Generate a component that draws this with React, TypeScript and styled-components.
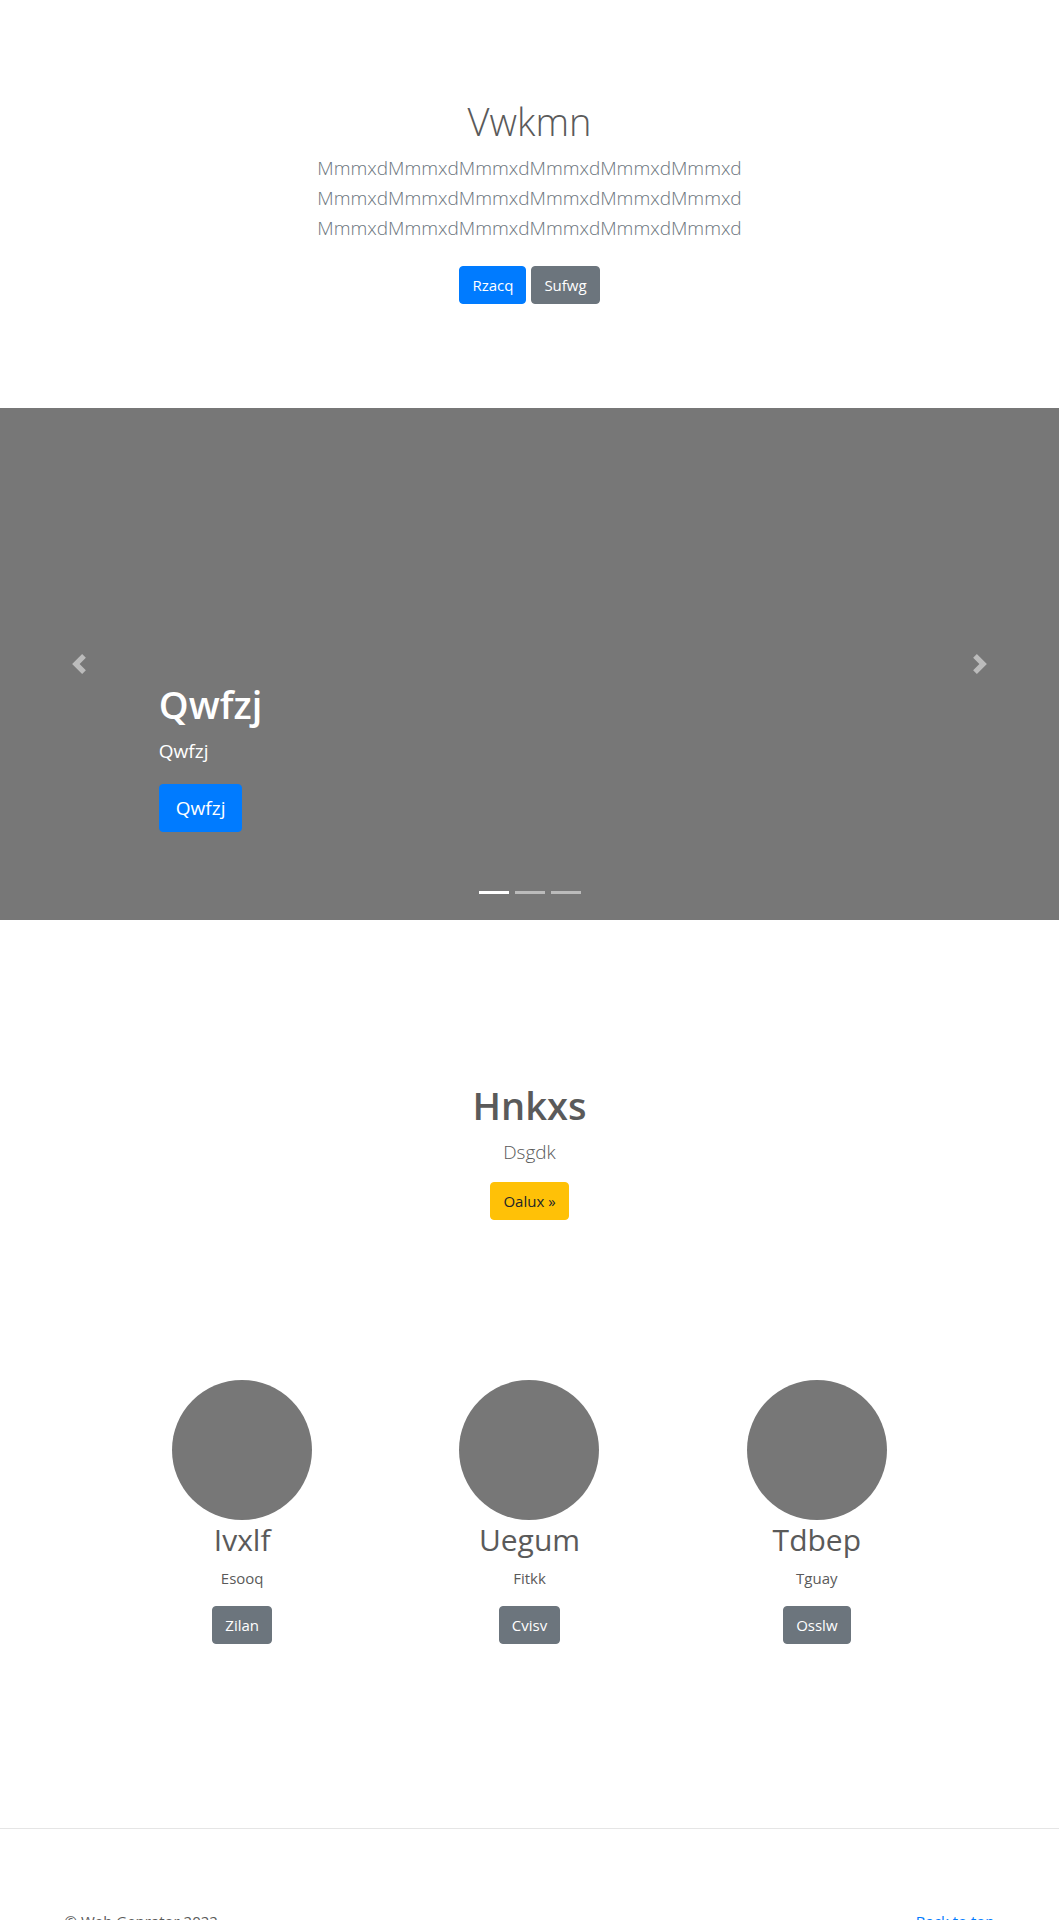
import React from "react";
import styled, { createGlobalStyle, css } from "styled-components";

const GlobalStyle = createGlobalStyle`
  *, *::before, *::after { box-sizing: border-box; }
  body {
    margin: 0;
    background: #fff;
    color: #5a5a5a;
    font-family: "Segoe UI", "Open Sans", "Noto Sans", sans-serif;
    font-size: 15px;
    line-height: 24px;
  }
  h1, h2, p { margin: 0; }
`;

type Tone = "primary" | "secondary" | "warning";
const tones: Record<Tone, { bg: string; fg: string }> = {
  primary: { bg: "#007bff", fg: "#fff" },
  secondary: { bg: "#6c757d", fg: "#fff" },
  warning: { bg: "#ffc107", fg: "#212529" },
};

const Button = styled.button<{ $tone: Tone; $large?: boolean }>`
  display: inline-block;
  border: 1px solid ${(p) => tones[p.$tone].bg};
  border-radius: 4px;
  padding: 6px 12px;
  background: ${(p) => tones[p.$tone].bg};
  color: ${(p) => tones[p.$tone].fg};
  font-family: inherit;
  font-size: 15px;
  line-height: 24px;
  cursor: pointer;
  ${(p) =>
    p.$large &&
    css`
      padding: 8px 16px;
      font-size: 19px;
      line-height: 30px;
    `}
`;

const Hero = styled.section`
  display: flex;
  flex-direction: column;
  align-items: center;
  padding: 97px 16px 104px;
  text-align: center;
`;

const Title = styled.h1<{ $weight: number }>`
  margin-bottom: 8px;
  font-size: 38px;
  line-height: 48px;
  font-weight: ${(p) => p.$weight};
`;

const Lead = styled.p<{ $muted?: boolean }>`
  margin-bottom: 15px;
  font-size: 19px;
  line-height: 30px;
  font-weight: 300;
  color: ${(p) => (p.$muted ? "#6c757d" : "inherit")};
`;

const Actions = styled.div`
  display: flex;
  gap: 5px;
  padding-top: 8px;
`;

const Carousel = styled.section`
  position: relative;
  display: flex;
  align-items: flex-end;
  height: 512px;
  padding: 0 15% 88px;
  background: #777;
  color: #fff;
`;

const CaptionText = styled.p`
  margin-bottom: 18px;
  font-size: 19px;
  line-height: 30px;
`;

const Control = styled.button<{ $side: "left" | "right" }>`
  position: absolute;
  top: 0;
  bottom: 0;
  ${(p) => p.$side}: 0;
  display: flex;
  align-items: center;
  justify-content: center;
  width: 15%;
  border: 0;
  padding: 0;
  background: none;
  opacity: 0.5;
  cursor: pointer;
`;

const Indicators = styled.div`
  position: absolute;
  left: 15%;
  right: 15%;
  bottom: 16px;
  display: flex;
  justify-content: center;
  gap: 6px;
`;

const Indicator = styled.button<{ $active?: boolean }>`
  width: 30px;
  height: 23px;
  border: 0 solid transparent;
  border-width: 10px 0;
  padding: 0;
  background: #fff;
  background-clip: padding-box;
  opacity: ${(p) => (p.$active ? 1 : 0.5)};
  cursor: pointer;
`;

const Callout = styled.section`
  display: flex;
  flex-direction: column;
  align-items: center;
  padding: 161px 16px 160px;
  text-align: center;
`;

const Features = styled.section`
  display: grid;
  grid-template-columns: repeat(3, 1fr);
  max-width: 862px;
  margin: 0 auto;
  padding-bottom: 184px;
`;

const Feature = styled.article`
  display: flex;
  flex-direction: column;
  align-items: center;
  text-align: center;
`;

const Circle = styled.div`
  width: 140px;
  height: 140px;
  border-radius: 50%;
  background: #777;
`;

const FeatureTitle = styled.h2`
  margin-bottom: 6px;
  font-size: 30px;
  line-height: 40px;
  font-weight: 400;
`;

const FeatureText = styled.p`
  margin-bottom: 16px;
`;

const Footer = styled.footer`
  border-top: 1px solid #e5e5e5;
  padding-top: 80px;
`;

const FooterRow = styled.div`
  display: flex;
  justify-content: space-between;
  max-width: 960px;
  margin: 0 auto;
  padding: 0 15px 16px;
`;

const Link = styled.a`
  color: #007bff;
  text-decoration: none;
`;

const features = [
  { title: "Ivxlf", text: "Esooq", action: "Zilan" },
  { title: "Uegum", text: "Fitkk", action: "Cvisv" },
  { title: "Tdbep", text: "Tguay", action: "Osslw" },
];

const Chevron = ({ d }: { d: string }) => (
  <svg width="20" height="20" viewBox="0 0 8 8" fill="#fff" aria-hidden="true">
    <path d={d} />
  </svg>
);

export default function App() {
  return (
    <>
      <GlobalStyle />
      <main id="top">
        <Hero>
          <Title $weight={300}>Vwkmn</Title>
          <Lead $muted>
            MmmxdMmmxdMmmxdMmmxdMmmxdMmmxd
            <br />
            MmmxdMmmxdMmmxdMmmxdMmmxdMmmxd
            <br />
            MmmxdMmmxdMmmxdMmmxdMmmxdMmmxd
          </Lead>
          <Actions>
            <Button $tone="primary">Rzacq</Button>
            <Button $tone="secondary">Sufwg</Button>
          </Actions>
        </Hero>

        <Carousel>
          <div>
            <Title as="h2" $weight={600}>Qwfzj</Title>
            <CaptionText>Qwfzj</CaptionText>
            <Button $tone="primary" $large>Qwfzj</Button>
          </div>
          <Control $side="left" aria-label="Previous">
            <Chevron d="M5.25 0l-4 4 4 4 1.5-1.5L4.25 4l2.5-2.5L5.25 0z" />
          </Control>
          <Control $side="right" aria-label="Next">
            <Chevron d="M2.75 0l-1.5 1.5L3.75 4l-2.5 2.5L2.75 8l4-4-4-4z" />
          </Control>
          <Indicators>
            <Indicator $active aria-label="Slide 1" />
            <Indicator aria-label="Slide 2" />
            <Indicator aria-label="Slide 3" />
          </Indicators>
        </Carousel>

        <Callout>
          <Title as="h2" $weight={600}>Hnkxs</Title>
          <Lead>Dsgdk</Lead>
          <Button $tone="warning">Oalux »</Button>
        </Callout>

        <Features>
          {features.map((f) => (
            <Feature key={f.title}>
              <Circle />
              <FeatureTitle>{f.title}</FeatureTitle>
              <FeatureText>{f.text}</FeatureText>
              <Button $tone="secondary">{f.action}</Button>
            </Feature>
          ))}
        </Features>
      </main>
      <Footer>
        <FooterRow>
          <p>© Web Genrator 2022</p>
          <Link href="#top">Back to top</Link>
        </FooterRow>
      </Footer>
    </>
  );
}
